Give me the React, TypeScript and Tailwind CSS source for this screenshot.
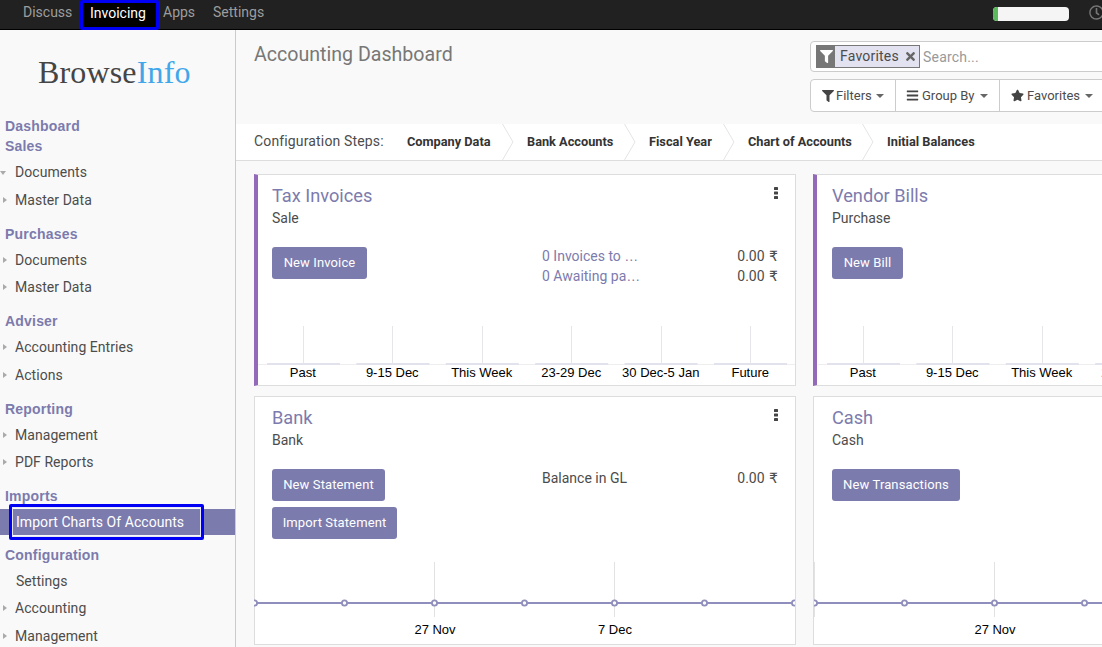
import { FaBars, FaFilter, FaRegClock, FaStar, FaTimes } from "react-icons/fa";

const roboto = "font-['Roboto','Liberation_Sans',sans-serif]";

function Caret({ open = false }: { open?: boolean }) {
  if (open) {
    return <span className="absolute left-0 top-[12px] border-x-[3.5px] border-t-[4px] border-x-transparent border-t-[#aaaaaa]" />;
  }
  return <span className="absolute left-[3px] top-[10px] border-y-[3.5px] border-l-[4px] border-y-transparent border-l-[#aaaaaa]" />;
}

function MenuRow({ label, caret = true, open = false }: { label: string; caret?: boolean; open?: boolean }) {
  return (
    <div className={`relative h-[27.5px] leading-[27.5px] text-[14px] tracking-[0.05px] text-[#4c4c4c] ${caret ? "pl-[15px]" : "pl-[16px]"}`}>
      {caret && <Caret open={open} />}
      {label}
    </div>
  );
}

function MenuHeading({ label, first = false }: { label: string; first?: boolean }) {
  return (
    <div className={`h-[20px] leading-[20px] pl-[5px] text-[14px] tracking-[0.2px] font-bold text-[#7c7bad] font-['Liberation_Sans',sans-serif] ${first ? "" : "mt-[9.5px]"} mb-[3px]`}>
      {label}
    </div>
  );
}

function Sidebar() {
  return (
    <aside className="w-[236px] shrink-0 border-r border-[#cccccc] bg-[#f9f9f9] overflow-hidden">
      <div className="h-[86px] pt-[22.5px] pl-[38px] text-[32px] leading-[38px] font-['Liberation_Serif',serif] tracking-[0.15px]">
        <span className="text-[#454545]">Browse</span>
        <span className="text-[#3fa7ea]">Info</span>
      </div>
      <div className="h-[20px] leading-[20px] pl-[5px] text-[14px] tracking-[0.2px] font-bold text-[#7c7bad] font-['Liberation_Sans',sans-serif]">Dashboard</div>
      <MenuHeading label="Sales" first />
      <MenuRow label="Documents" open />
      <MenuRow label="Master Data" />
      <MenuHeading label="Purchases" />
      <MenuRow label="Documents" />
      <MenuRow label="Master Data" />
      <MenuHeading label="Adviser" />
      <MenuRow label="Accounting Entries" />
      <MenuRow label="Actions" />
      <MenuHeading label="Reporting" />
      <MenuRow label="Management" />
      <MenuRow label="PDF Reports" />
      <MenuHeading label="Imports" />
      <div className="relative h-[26px] leading-[26px] pl-[16px] text-[14px] tracking-[0.05px] text-white bg-[#7c7bad]">
        Import Charts Of Accounts
        <span className="absolute left-[9px] top-[-5px] w-[195px] h-[36px] border-[3px] border-[#0000f5] rounded-[2px] outline outline-1 -outline-offset-4 outline-[#e8e8f4]" />
      </div>
      <MenuHeading label="Configuration" />
      <MenuRow label="Settings" caret={false} />
      <MenuRow label="Accounting" />
      <MenuRow label="Management" />
    </aside>
  );
}

function TopBar() {
  return (
    <header className="relative h-[30px] shrink-0 bg-[#212121] border-b border-black flex items-start text-[14px] text-[#9d9d9d]">
      <span className="ml-[23px] w-[49px] leading-[25px]">Discuss</span>
      <span className="ml-[8px] w-[79px] h-[30px] border-[3px] border-[#0000f5] rounded-[2px] bg-black text-white pl-[7px] leading-[20px]">Invoicing</span>
      <span className="ml-[4px] w-[32px] leading-[25px]">Apps</span>
      <span className="ml-[18px] leading-[25px]">Settings</span>
      <div className="absolute left-[993px] top-[7px] w-[76px] h-[14px] rounded-[4px] bg-[#f5f5f5] overflow-hidden">
        <div className="w-[5px] h-full bg-[#5cb85c]" />
      </div>
      <FaRegClock className="absolute left-[1089px] top-[5px] text-[15px] text-[#777777]" />
    </header>
  );
}

function DropCaret() {
  return <span className="ml-[2px] mt-[1px] border-x-[4px] border-t-[4px] border-x-transparent border-t-[#666666]" />;
}

function ControlPanel() {
  return (
    <div className="h-[94px] shrink-0 bg-[#f9f9f9] flex">
      <h1 className="pl-[18px] pt-[11px] w-[574px] shrink-0 text-[19.6px] leading-[27px] text-[#777777]">Accounting Dashboard</h1>
      <div className="pt-[11px] flex-1">
        <div className="w-[320px] h-[31px] border border-[#cccccc] rounded-[4px] bg-white pl-[5px] pt-[3px] flex items-start">
          <div className="h-[23px] flex border border-[#777777]">
            <span className="w-[18px] bg-[#777777] flex items-center justify-center text-white text-[13px]"><FaFilter /></span>
            <span className="bg-[#e2e2f0] w-[84px] pl-[5px] flex items-center text-[14px] tracking-[0.2px] text-[#4c4c4c]">
              Favorites
              <FaTimes className="ml-[5px] text-[13px] text-[#666666]" />
            </span>
          </div>
          <span className="ml-[3px] mt-[1px] text-[14px] tracking-[0.2px] leading-[23px] text-[#999999]">Search...</span>
        </div>
        <div className="mt-[7px] flex text-[13px] text-[#4c4c4c]">
          <div className="w-[86px] h-[33px] border border-[#cccccc] rounded-l-[4px] bg-white flex items-center pl-[11px] gap-[2px]">
            <FaFilter className="text-[12px] text-[#444444]" />Filters<DropCaret />
          </div>
          <div className="w-[105px] h-[33px] -ml-px border border-[#cccccc] bg-white flex items-center pl-[10px] gap-[3px]">
            <FaBars className="text-[13px] text-[#444444]" />Group By<DropCaret />
          </div>
          <div className="w-[110px] h-[33px] -ml-px border border-[#cccccc] bg-white flex items-center pl-[11px] gap-[3px]">
            <FaStar className="text-[13px] text-[#444444]" />Favorites<DropCaret />
          </div>
        </div>
      </div>
    </div>
  );
}

const steps = [
  { label: "Company Data", width: 120 },
  { label: "Bank Accounts", width: 122 },
  { label: "Fiscal Year", width: 99 },
  { label: "Chart of Accounts", width: 139 },
  { label: "Initial Balances", width: 120 },
];

function ConfigSteps() {
  return (
    <div className="h-[37px] shrink-0 bg-white border-b border-[#dddddd] flex items-center pl-[18px] text-[14px] text-[#4c4c4c]">
      <span className="w-[153px] -mt-[2px] tracking-[0.15px]">Configuration Steps:</span>
      {steps.map((s, i) => (
        <div key={s.label} className="relative h-full flex items-center text-[12.75px] font-bold text-[#333333]" style={{ width: s.width }}>
          {s.label}
          {i < 4 && (
            <svg className="absolute top-0 right-[-1px] w-[26px] h-[36px]" viewBox="0 0 26 36" fill="none">
              <path d="M0.5 0 L11 18 L0.5 36" stroke="#e4e4e4" />
            </svg>
          )}
        </div>
      ))}
    </div>
  );
}

function ActionButton({ label, width }: { label: string; width: number }) {
  return (
    <div className="h-[32px] rounded-[3px] bg-[#7c7bad] text-white text-[13px] flex items-center justify-center tracking-[0.12px]" style={{ width }}>
      {label}
    </div>
  );
}

const barCols = ["Past", "9-15 Dec", "This Week", "23-29 Dec", "30 Dec-5 Jan", "Future"];

function BarChart({ shifted = false }: { shifted?: boolean }) {
  return (
    <div className={`absolute right-0 bottom-0 h-[60px] ${shifted ? "left-[1px]" : "left-0"}`}>
      <svg className="block w-[537px] h-[40px]" viewBox="0 0 537 40" fill="none">
        <path d="M0 39.5 H537" stroke="#eeeeee" />
        {barCols.map((_, i) => (
          <g key={i}>
            <rect x={9 + i * 89.4} y={38} width={73} height={2} fill="#e2e2ec" />
            <path d={`M${Math.round(45 + i * 89.4) + 0.5} 1 V39`} stroke="#e6e6ea" />
          </g>
        ))}
      </svg>
      <div className="grid grid-cols-6 w-[537px] text-center text-[13px] leading-[15px] text-black font-['Liberation_Sans',sans-serif]">
        {barCols.map((c) => (
          <span key={c} className="whitespace-nowrap">{c}</span>
        ))}
      </div>
    </div>
  );
}

function LineChart({ labels, shifted = false }: { labels: { x: number; text: string }[]; shifted?: boolean }) {
  const dots = [0, 90, 180, 270, 360, 450, 540];
  return (
    <div className={`absolute right-0 bottom-0 h-[84px] overflow-hidden ${shifted ? "left-0" : "left-[-1px]"}`}>
      <svg className="block w-[541px] h-[62px]" viewBox="0 0 541 62" fill="none">
        {labels.map((l) => (
          <path key={l.x} d={`M${l.x + 0.5} 2 V57`} stroke="#e2e2e2" />
        ))}
        <path d="M0 43 H541" stroke="#8f8ebd" strokeWidth="2" />
        {dots.map((d) => (
          <circle key={d} cx={d + 0.5} cy={43} r={2.6} fill="#ffffff" stroke="#8f8ebd" strokeWidth="1.8" />
        ))}
      </svg>
      <div className="relative h-[22px] text-[13px] leading-[15px] text-black font-['Liberation_Sans',sans-serif]">
        {labels.map((l) => (
          <span key={l.x} className="absolute top-0 -translate-x-1/2 whitespace-nowrap" style={{ left: l.x + 1 }}>{l.text}</span>
        ))}
      </div>
    </div>
  );
}

function Amount() {
  return (
    <span className="text-[14px] text-[#4c4c4c]">
      0.00 <span className="ml-[1px] font-['DejaVu_Sans',sans-serif]">₹</span>
    </span>
  );
}

function CardMenu() {
  return (
    <svg className="absolute right-[17px] top-[12px] w-[4px] h-[12px]" viewBox="0 0 4 12" fill="#444444">
      <rect x="0" y="0" width="4" height="3" rx="0.6" />
      <rect x="0" y="4.5" width="4" height="3" rx="0.6" />
      <rect x="0" y="9" width="4" height="3" rx="0.6" />
    </svg>
  );
}

function Card({
  title,
  subtitle,
  accent = false,
  menu = true,
  shifted = false,
  children,
  buttons,
  chart,
  height,
}: {
  title: string;
  subtitle: string;
  accent?: boolean;
  menu?: boolean;
  shifted?: boolean;
  children?: React.ReactNode;
  buttons: { label: string; width: number }[];
  chart: React.ReactNode;
  height: number;
}) {
  const pad = accent ? (shifted ? "pl-[15px]" : "pl-[14px]") : shifted ? "pl-[18px]" : "pl-[17px]";
  return (
    <div className={`relative w-[542px] bg-white border border-[#dddddd] ${accent ? "border-l-[4px] border-l-[#9469b9]" : ""} ${pad}`} style={{ height }}>
      <div className="text-[18.2px] leading-[24px] pt-[9px] text-[#7c7bad] h-[32px] box-border">{title}</div>
      <div className="text-[14px] leading-[20px] mt-[1px] text-[#4c4c4c]">{subtitle}</div>
      <div className="mt-[19px] flex">
        <div className="w-[270px] flex flex-col gap-[6px]">
          {buttons.map((b) => (
            <ActionButton key={b.label} {...b} />
          ))}
        </div>
        {children}
      </div>
      {menu && <CardMenu />}
      {chart}
    </div>
  );
}

function SummaryRows({ rows, tone }: { rows: { text: string; cut?: boolean }[]; tone: string }) {
  return (
    <div className="w-[236px] -mt-[1px]">
      {rows.map((r) => (
        <div key={r.text} className="flex justify-between h-[20px] leading-[20px] text-[14px]">
          <span className={tone}>
            {r.text}
            {r.cut && <span className="font-['Liberation_Sans',sans-serif]">…</span>}
          </span>
          <Amount />
        </div>
      ))}
    </div>
  );
}

export default function App() {
  return (
    <div className={`w-[1102px] h-[647px] overflow-hidden flex flex-col bg-[#f9f9f9] ${roboto}`}>
      <TopBar />
      <div className="flex flex-1 min-h-0">
        <Sidebar />
        <main className="flex-1 min-w-0 flex flex-col overflow-hidden">
          <ControlPanel />
          <ConfigSteps />
          <div className="pl-[18px] pt-[13px] grid grid-cols-[542px_542px] gap-x-[17px] gap-y-[10px] w-[1200px]">
            <Card
              title="Tax Invoices"
              subtitle="Sale"
              accent
              height={212}
              buttons={[{ label: "New Invoice", width: 95 }]}
              chart={<BarChart />}
            >
              <SummaryRows rows={[{ text: "0 Invoices to ", cut: true }, { text: "0 Awaiting pa", cut: true }]} tone="text-[#7c7bad]" />
            </Card>
            <Card
              title="Vendor Bills"
              subtitle="Purchase"
              accent
              shifted
              menu={false}
              height={212}
              buttons={[{ label: "New Bill", width: 71 }]}
              chart={<BarChart shifted />}
            />
            <Card
              title="Bank"
              subtitle="Bank"
              height={249}
              buttons={[
                { label: "New Statement", width: 113 },
                { label: "Import Statement", width: 125 },
              ]}
              chart={<LineChart labels={[{ x: 180, text: "27 Nov" }, { x: 360, text: "7 Dec" }]} />}
            >
              <SummaryRows rows={[{ text: "Balance in GL" }]} tone="text-[#4c4c4c]" />
            </Card>
            <Card
              title="Cash"
              subtitle="Cash"
              shifted
              menu={false}
              height={249}
              buttons={[{ label: "New Transactions", width: 128 }]}
              chart={<LineChart shifted labels={[{ x: 0, text: "" }, { x: 180, text: "27 Nov" }]} />}
            />
          </div>
        </main>
      </div>
    </div>
  );
}
